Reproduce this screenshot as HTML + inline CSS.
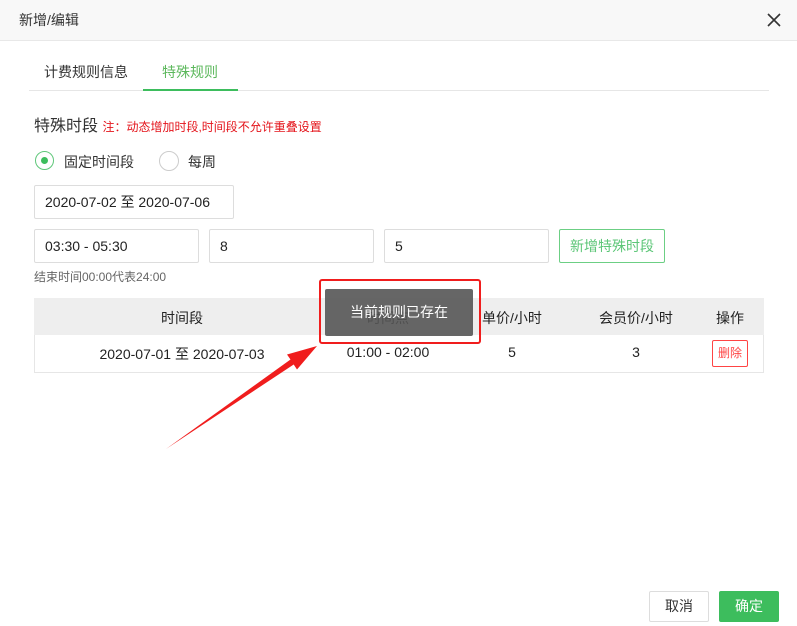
<!DOCTYPE html>
<html><head><meta charset="utf-8"><style>
*{box-sizing:border-box;margin:0;padding:0}
body{width:797px;height:626px;background:#fff;font-family:"Liberation Sans","Noto Sans CJK SC",sans-serif;color:#333;position:relative;overflow:hidden;font-size:14px}
.abs{position:absolute}
.hdr{left:0;top:0;width:797px;height:41px;background:#f8f8f8;border-bottom:1px solid #e8e8e8}
.inp{border:1px solid #ddd;border-radius:2px;height:34px;line-height:32px;padding-left:10px;font-size:14px;color:#222}
.th,.td{position:absolute;text-align:center;font-size:14px;color:#222}
</style></head><body>
<div class="abs hdr"></div>
<div class="abs" style="left:19px;top:10px;font-size:14px;color:#333">新增/编辑</div>
<svg class="abs" style="left:767px;top:13px" width="14" height="14"><path d="M1 1L13 13M13 1L1 13" stroke="#333" stroke-width="1.6"/></svg>
<div class="abs" style="left:29px;top:90px;width:740px;height:1px;background:#e6e6e6"></div>
<div class="abs" style="left:44px;top:62px;font-size:14px;color:#333">计费规则信息</div>
<div class="abs" style="left:162px;top:62px;font-size:14px;color:#5cb85c">特殊规则</div>
<div class="abs" style="left:143px;top:89px;width:95px;height:2px;background:#3dbd5d"></div>
<div class="abs" style="left:34px;top:112px;font-size:16px;color:#333">特殊时段 <span style="font-size:12px;color:#e4141b">注：动态增加时段,时间段不允许重叠设置</span></div>
<div class="abs" style="left:35px;top:151px;width:19px;height:19px;border:1px solid #5fc77a;border-radius:50%"></div>
<div class="abs" style="left:41px;top:157px;width:7px;height:7px;background:#3dbd5d;border-radius:50%"></div>
<div class="abs" style="left:64px;top:152px;font-size:14px">固定时间段</div>
<div class="abs" style="left:159px;top:151px;width:20px;height:20px;border:1px solid #ccc;border-radius:50%"></div>
<div class="abs" style="left:188px;top:152px;font-size:14px">每周</div>
<div class="abs inp" style="left:34px;top:185px;width:200px">2020-07-02 至 2020-07-06</div>
<div class="abs inp" style="left:34px;top:229px;width:165px">03:30 - 05:30</div>
<div class="abs inp" style="left:209px;top:229px;width:165px">8</div>
<div class="abs inp" style="left:384px;top:229px;width:165px">5</div>
<div class="abs" style="left:559px;top:229px;width:106px;height:34px;border:1px solid #6ccf84;border-radius:2px;color:#5cc677;text-align:center;line-height:32px;font-size:14px">新增特殊时段</div>
<div class="abs" style="left:34px;top:268px;font-size:12px;color:#666">结束时间00:00代表24:00</div>
<div class="abs" style="left:34px;top:298px;width:730px;height:37px;background:#eee"></div>
<div class="abs" style="left:34px;top:335px;width:730px;height:38px;border:1px solid #e6e6e6;border-top:none"></div>
<div class="th" style="left:34px;width:296px;top:308px">时间段</div>
<div class="th" style="left:330px;width:116px;top:308px">时间点</div>
<div class="th" style="left:452px;width:120px;top:308px">单价/小时</div>
<div class="th" style="left:576px;width:120px;top:308px">会员价/小时</div>
<div class="th" style="left:700px;width:60px;top:308px">操作</div>
<div class="td" style="left:34px;width:296px;top:344px">2020-07-01 至 2020-07-03</div>
<div class="td" style="left:330px;width:116px;top:344px">01:00 - 02:00</div>
<div class="td" style="left:452px;width:120px;top:344px">5</div>
<div class="td" style="left:576px;width:120px;top:344px">3</div>
<div class="abs" style="left:712px;top:340px;width:36px;height:27px;border:1px solid #f44;border-radius:2px;color:#f44;font-size:12px;text-align:center;line-height:25px">删除</div>
<div class="abs" style="left:325px;top:289px;width:148px;height:47px;background:rgba(85,85,85,0.9);border-radius:2px;color:#fff;text-align:center;line-height:47px;font-size:14px">当前规则已存在</div>
<div class="abs" style="left:319px;top:279px;width:162px;height:65px;border:2px solid #f01d1d;border-radius:3px"></div>
<svg class="abs" style="left:0;top:0" width="797" height="626"><polygon points="166,449 290.5,359.5 287,354.5 317,346 297,369.5 293.7,364.5" fill="#f01d1d"/></svg>
<div class="abs" style="left:649px;top:591px;width:60px;height:31px;border:1px solid #ddd;border-radius:2px;text-align:center;line-height:29px;font-size:14px;color:#333">取消</div>
<div class="abs" style="left:719px;top:591px;width:60px;height:31px;background:#3dbd5d;border-radius:2px;text-align:center;line-height:31px;font-size:14px;color:#fff">确定</div>
</body></html>
